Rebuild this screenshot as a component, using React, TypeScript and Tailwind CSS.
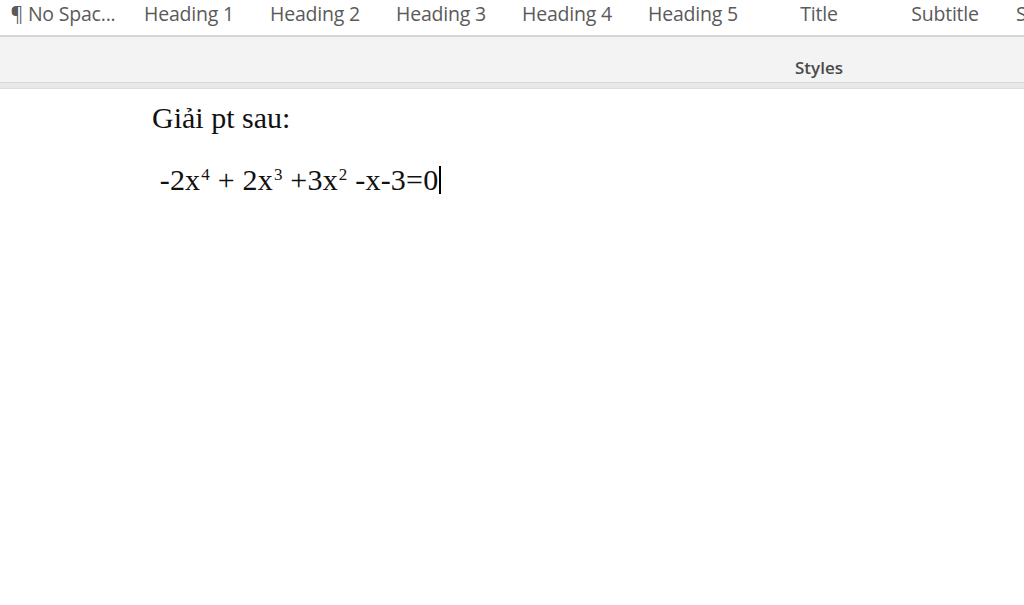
import React from 'react'

const styleItems = ['¶ No Spac...', 'Heading 1', 'Heading 2', 'Heading 3', 'Heading 4', 'Heading 5', 'Title', 'Subtitle']

export default function App() {
  return (
    <div className="w-[1024px] h-[605px] overflow-hidden bg-white">
      {/* style gallery */}
      <div className="flex h-[35px] items-center overflow-hidden whitespace-nowrap bg-white" style={{ fontFamily: '"Open Sans", "Noto Sans", sans-serif' }}>
        {styleItems.map(s => (
          <div key={s} className="w-[126px] shrink-0 text-center text-[19.5px] tracking-[-0.2px] leading-none text-[#5a5a5a] -mt-[7px]">{s}</div>
        ))}
        <div className="shrink-0 pl-[8px] text-[19.5px] leading-none text-[#5a5a5a] -mt-[7px]">S</div>
      </div>
      <div className="h-[2px] bg-[#d6d6d6]" />
      <div className="flex h-[45px] items-center bg-[#f3f3f3]" style={{ fontFamily: '"Open Sans", "Noto Sans", sans-serif' }}>
        <div className="w-[756px] shrink-0" />
        <div className="w-[126px] shrink-0 pt-[17px] text-center text-[17px] font-semibold text-[#4a4a4a]">Styles</div>
      </div>
      <div className="h-[1px] bg-[#d8d8d8]" />
      <div className="h-[5px] bg-[#e8e8e8]" />
      <div className="h-[1px] bg-[#dedede]" />

      {/* document */}
      <div className="pl-[152px] pt-[14px] text-[30px] leading-none text-[#111]" style={{ fontFamily: '"Liberation Serif", "Times New Roman", serif' }}>
        <div className="h-[34px]">Giải pt sau:</div>
        <div className="mt-[28px] flex items-center whitespace-pre tracking-[0.2px]">
          <span>
            {' -2x'}<sup className="text-[17px] -top-[10px] pl-[1px]">4</sup>{' + 2x'}<sup className="text-[17px] -top-[10px] pl-[1px]">3</sup>{' +3x'}<sup className="text-[17px] -top-[10px] pl-[1px]">2</sup>{' -x-3=0'}
          </span>
          <span className="ml-[1px] inline-block h-[28px] w-[2px] bg-black" />
        </div>
      </div>
    </div>
  )
}
